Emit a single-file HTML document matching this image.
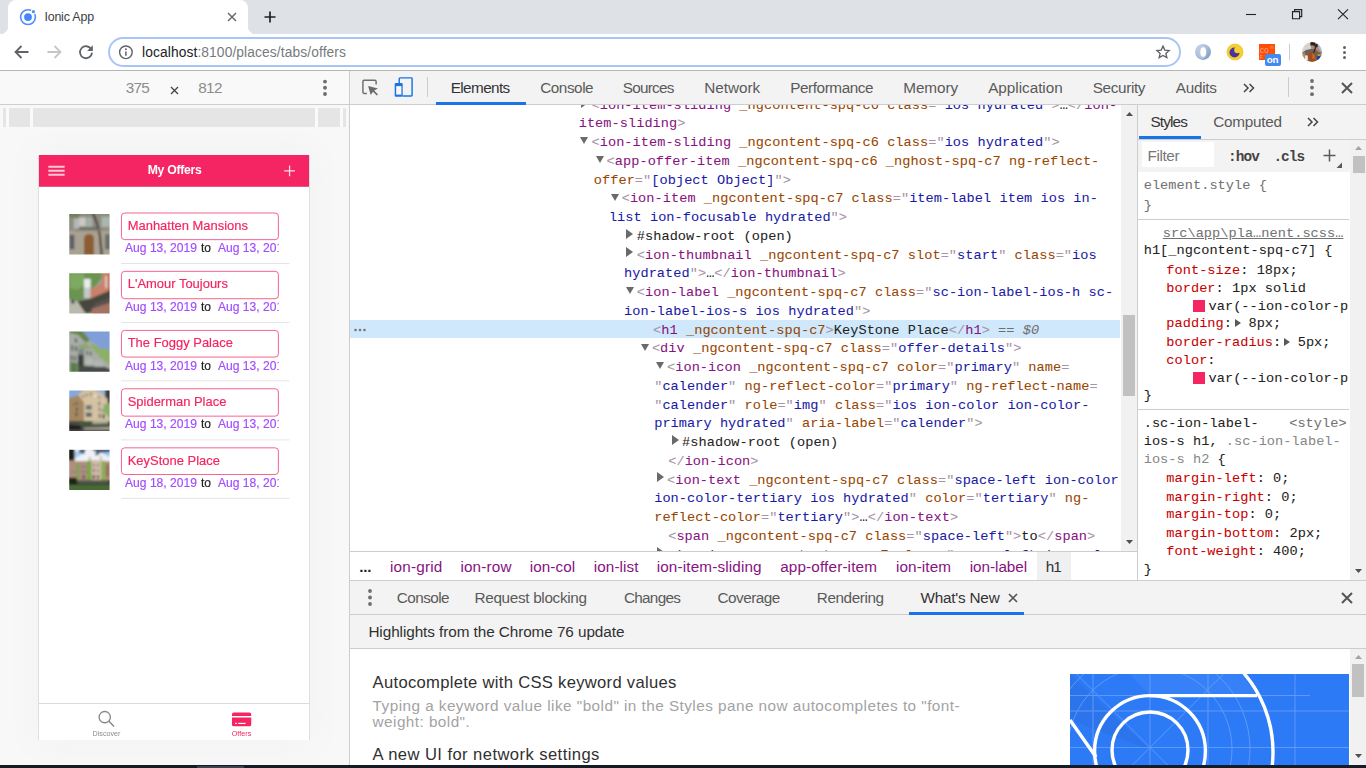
<!DOCTYPE html>
<html lang="en"><head><meta charset="utf-8"><title>Ionic App</title>
<style>
*{box-sizing:border-box}
html,body{margin:0;padding:0}
body{width:1366px;height:768px;overflow:hidden;position:relative;background:#fff;font-family:"Liberation Sans",sans-serif}
.t{position:absolute;white-space:pre;display:block}
.sans{font-family:"Liberation Sans",sans-serif}
.mono{font-family:"Liberation Mono",monospace}
.b{font-weight:700}
.abs{position:absolute}
svg{position:absolute;overflow:visible}
#tabstrip{left:0;top:0;width:1366px;height:34px;background:#dee1e6}
#tab{left:8px;top:0;width:240px;height:34px;background:#fff;border-radius:8px 8px 0 0}
#tab:before,#tab:after{content:"";position:absolute;bottom:0;width:8px;height:8px;background:radial-gradient(circle at 0 0,transparent 8px,#fff 8.5px)}
#tab:before{left:-8px}
#tab:after{right:-8px;background:radial-gradient(circle at 100% 0,transparent 8px,#fff 8.5px)}
#toolbar{left:0;top:34px;width:1366px;height:37px;background:#fff;border-bottom:1px solid #b6b6b6}
#omni{left:108px;top:37px;width:1073px;height:30px;border:2px solid #a9c5f7;border-radius:15px;background:#fff}

#devarea{left:0;top:71px;width:349px;height:694px;background:#f8f8f8}
#devbar{left:0;top:71px;width:349px;height:34px;border-bottom:1px solid #cdcdcd;background:#f9f9f9}
#vsep{left:349px;top:71px;width:1px;height:694px;background:#cdcdcd}
#mq{left:3px;top:108px;width:343px;height:19px;background:#e5e5e5}
#mq i{position:absolute;top:0;width:3px;height:19px;background:#fafafa}
#phonewrap{left:39px;top:155px;width:270px;height:585px;background:#fff;box-shadow:-1px 0 0 #dedede,1px 0 0 #dedede,0 0 22px 6px rgba(255,255,255,.7),0 0 24px rgba(120,120,120,.18)}
#phone{left:0;top:0;width:375px;height:812px;transform:scale(.72,.7204);transform-origin:0 0;overflow:hidden;background:#fff;font-family:"Liberation Sans",sans-serif}
#hdr{left:0;top:0;width:375px;height:44px;background:#f42562;box-shadow:inset 0 -1px 0 rgba(0,0,0,.13)}
#hdr .ttl{left:0;top:0;width:375px;height:44px;line-height:42px;text-align:center;color:#fff;font-size:17px;font-weight:700;letter-spacing:-.42px;padding-left:1.5px}
.thumb{left:41.5px;width:56px;height:56px;overflow:hidden}
.h1{left:114.2px;width:219px;height:38.4px;border:1px solid #f42562;border-radius:5px;color:#f42562;font-size:18px;line-height:34.8px;padding:0 8px;white-space:pre;overflow:hidden;-webkit-text-stroke:.25px #f42562}
.dt{left:114.2px;width:219px;height:22px;overflow:hidden;white-space:pre;font-size:16.8px;line-height:22px;color:#a24dff;-webkit-text-stroke:.25px #a24dff}
.dt b{font-weight:400;color:#222;-webkit-text-stroke:.25px #222}
.dv{left:114.2px;width:234px;height:1px;background:#dadada}
#tabbar{left:0;top:761px;width:375px;height:51px;border-top:1px solid #cfcfcf;background:#fff}
.tl{top:36px;width:187.5px;text-align:center;font-size:10px;line-height:12px;position:absolute}

#dtbar{left:350px;top:71px;width:1016px;height:34px;background:#f3f3f3;border-bottom:1px solid #cdcdcd}
#tree{left:350px;top:105px;width:770px;height:446px;overflow:hidden;background:#fff}
.ln{position:absolute;white-space:pre;font-family:"Liberation Mono",monospace;font-size:13.6px;letter-spacing:0.054px;line-height:18.75px;height:18.75px;color:#222;-webkit-text-stroke:.06px}
.p{color:#a894a6}.g{color:#881280}.a{color:#994500}.v{color:#1a1aa6}.x{color:#222}
.td,.tr{position:absolute;width:0;height:0}
.td{border-left:4.8px solid transparent;border-right:4.8px solid transparent;border-top:7.2px solid #6a6a6a}
.tr{border-top:5.1px solid transparent;border-bottom:5.1px solid transparent;border-left:7.4px solid #6a6a6a}
#sel{left:0;top:215px;width:770px;height:18px;background:#cfe8fc}
.sb{background:#f1f1f1}
.th{background:#c1c1c1}

#stpane{left:1138px;top:105px;width:228px;height:475px;background:#fff;overflow:hidden}
#sttabs{left:0;top:0;width:228px;height:35px;background:#f3f3f3;border-bottom:1px solid #cdcdcd}
#stfilter{left:0;top:35px;width:228px;height:30px;background:#f3f3f3}
#stbody{left:0;top:65px;width:211px;height:410px;overflow:hidden}
.sl{position:absolute;white-space:pre;font-family:"Liberation Mono",monospace;font-size:13.6px;letter-spacing:0.054px;line-height:18px;height:18px;color:#222;-webkit-text-stroke:.06px}
.pr{color:#c80000}.gy{color:#888}.dg{color:#737373}
.sw{position:absolute;width:12px;height:12px;background:#f42562}
.hr{position:absolute;left:0;width:211px;height:1px;background:#cdcdcd}
.tri{position:absolute;width:0;height:0;border-top:4px solid transparent;border-bottom:4px solid transparent;border-left:6px solid #5a5a5a}

#crumbs{left:350px;top:551px;width:787px;height:30px;background:#fff;border-top:1px solid #cdcdcd}
#dsep{left:350px;top:580px;width:1016px;height:1px;background:#cdcdcd}
#drawtabs{left:350px;top:581px;width:1016px;height:34px;background:#f3f3f3;border-bottom:1px solid #cdcdcd}
#hl{left:350px;top:615px;width:1016px;height:34px;background:#f3f3f3;border-bottom:1px solid #cdcdcd}
#wn{left:350px;top:649px;width:1016px;height:116px;background:#fff;overflow:hidden}
#taskbar{left:0;top:765px;width:1366px;height:3px;background:#141c26}
</style></head>
<body>
<svg width="0" height="0" style="position:absolute"><defs><filter id="bl" x="-15%" y="-15%" width="130%" height="130%"><feGaussianBlur stdDeviation="1.7"/></filter><filter id="bl2" x="-10%" y="-10%" width="120%" height="120%"><feGaussianBlur stdDeviation="0.55"/></filter></defs></svg>
<div class="abs" id="tabstrip"><div class="abs" id="tab"></div></div>
<div class="abs" id="toolbar"></div><div class="abs" id="omni"></div>
<svg style="left:19px;top:8px" width="18" height="18" viewBox="0 0 18 18"><circle cx="9" cy="9.1" r="7.4" fill="none" stroke="#4d8dff" stroke-width="1.6"/><circle cx="9" cy="9.1" r="3.9" fill="#4586ff"/><circle cx="14.4" cy="3.7" r="2.7" fill="#fff"/><circle cx="14.4" cy="3.7" r="1.6" fill="#4d8dff"/></svg>
<span class="t sans" style="left:44.4px;top:6.7px;font-size:12.4px;letter-spacing:-0.169px;color:#3c4043;line-height:20px;">Ionic App</span>
<svg style="left:227px;top:12px" width="10" height="10" viewBox="0 0 10 10"><path d="M1 1L9 9M9 1L1 9" stroke="#5f6368" stroke-width="1.4" fill="none"/></svg>
<svg style="left:264px;top:11px" width="12" height="12" viewBox="0 0 12 12"><path d="M6 0.5V11.5M0.5 6H11.5" stroke="#202124" stroke-width="1.7" fill="none"/></svg>
<svg style="left:1246px;top:9px" width="110" height="12" viewBox="0 0 110 12"><path d="M0 5.5H10" stroke="#222" stroke-width="1.1" fill="none"/><path d="M46.5 2.6H53.6V9.7H46.5ZM48.6 2.6V0.6H55.7V7.6H53.6" stroke="#222" stroke-width="1.15" fill="none"/><path d="M92 0.3L102 10.1M102 0.3L92 10.1" stroke="#222" stroke-width="1.1" fill="none"/></svg>
<svg style="left:14px;top:45px" width="16" height="14" viewBox="0 0 16 14"><path d="M14.5 7H2M7.5 1L1.5 7L7.5 13" stroke="#5f6368" stroke-width="1.8" fill="none"/></svg>
<svg style="left:46px;top:45px" width="16" height="14" viewBox="0 0 16 14"><path d="M1.5 7H14M8.5 1L14.5 7L8.5 13" stroke="#c4c7ca" stroke-width="1.8" fill="none"/></svg>
<svg style="left:78px;top:44px" width="16" height="16" viewBox="0 0 16 16"><path d="M13.2 5.2A6 6 0 1 0 14 8.6" stroke="#5f6368" stroke-width="1.8" fill="none"/><path d="M14.8 1.2V6.9H9.1Z" fill="#5f6368"/></svg>
<svg style="left:118px;top:45px" width="15" height="15" viewBox="0 0 15 15"><circle cx="7.9" cy="7.3" r="6.3" fill="none" stroke="#5f6368" stroke-width="1.4"/><path d="M7.9 6.4V10.8" stroke="#5f6368" stroke-width="1.5"/><circle cx="7.9" cy="4.2" r="0.95" fill="#5f6368"/></svg>
<span class="t sans" style="left:142px;top:42.5px;font-size:13.8px;line-height:20px;letter-spacing:0.102px;color:#202124">localhost<span style="color:#767a7e">:8100/places/tabs/offers</span></span>
<svg style="left:1155px;top:44px" width="16" height="16" viewBox="0 0 24 24"><path d="M12 3.2l2.7 6 6.5.6-4.9 4.3 1.5 6.4L12 17.1l-5.8 3.4 1.5-6.4-4.9-4.3 6.5-.6z" fill="none" stroke="#5f6368" stroke-width="2"/></svg>
<svg style="left:1194px;top:43px" width="18" height="18" viewBox="0 0 18 18"><defs><linearGradient id="g1" x1="0" y1="0" x2="1" y2="1"><stop offset="0" stop-color="#cfdcee"/><stop offset="1" stop-color="#7896c0"/></linearGradient></defs><circle cx="9" cy="8.9" r="8" fill="url(#g1)"/><ellipse cx="8.2" cy="9" rx="4.6" ry="6.6" fill="#b9cce4" opacity=".8"/><ellipse cx="9.2" cy="9" rx="2.9" ry="4.8" fill="#fff"/></svg>
<svg style="left:1226px;top:43px" width="18" height="18" viewBox="0 0 18 18"><circle cx="9" cy="9" r="8" fill="#f7d02e" stroke="#e3b91f" stroke-width=".6"/><circle cx="8.5" cy="9.5" r="5" fill="#47349c"/><circle cx="11.5" cy="7" r="3.3" fill="#f7d02e"/></svg>
<div class="abs" style="left:1259px;top:44px;width:16px;height:16px;background:#fe4d07"></div>
<svg style="left:1259px;top:44px" width="16" height="16" viewBox="0 0 16 16"><text x="0.8" y="9.2" font-family="Liberation Sans,sans-serif" font-size="8.5" fill="#ffa581">co</text><text x="11" y="4.6" font-family="Liberation Sans,sans-serif" font-size="4.5" fill="#ffa581">m</text><text x="0.8" y="15" font-family="Liberation Sans,sans-serif" font-size="5" fill="#ffa581">F</text></svg>
<div class="abs" style="left:1265px;top:54px;width:16px;height:12px;background:#4189f4;border-radius:2px"></div>
<span class="t sans b" style="left:1266.7px;top:53.8px;font-size:9.8px;letter-spacing:-0.086px;color:#fff;line-height:12px;">on</span>
<div class="abs" style="left:1289px;top:44px;width:1px;height:16px;background:#c8cacd"></div>
<svg style="left:1302.1px;top:41.9px" width="20" height="20" viewBox="0 0 20 20"><defs><clipPath id="av"><circle cx="10" cy="10" r="10"/></clipPath></defs><g clip-path="url(#av)"><g filter="url(#bl2)"><rect x="-3" y="-3" width="26" height="26" fill="#8a8078"/><path d="M-3 -3H9V7L3 10L-3 13Z" fill="#d6d2ce"/><path d="M14 3L23 2V11L16 9Z" fill="#a8b6c8"/><path d="M0 11L4 8L9 7H14L18 10L19 14L14 16L3 15Z" fill="#6c625a"/><rect x="8.4" y="0" width="4.6" height="3.8" fill="#2a2420"/><rect x="9.1" y="3.4" width="2.4" height="3.8" fill="#b88a74"/><path d="M12.6 2.4L15.6 2L15.8 5.4L13 6Z" fill="#34201c"/><path d="M12.6 5.6L15.8 5.2L18.8 9.4L17.6 10.6L14 8Z" fill="#b98674"/><path d="M13.2 5L14.2 5.4L10.2 16L9.2 15.6Z" fill="#2e2018"/><path d="M0.5 11L3 10.6L3.4 15L1 15Z" fill="#c08850"/><path d="M6 14C6 11 8 10.6 10 10.6C13 10.6 14.4 13 14 17C13.6 20 12 21 9.6 21C7 21 6 18 6 14Z" fill="#a44c1a"/><path d="M10.4 11.4C12.4 11.6 13.2 13.6 12.8 16.4L10.6 17Z" fill="#c86c2a"/><rect x="3" y="13.4" width="2.8" height="4.6" fill="#e6e2de"/><path d="M14.8 13.6L18.8 13L17 19L14.6 18Z" fill="#1b409c"/><path d="M15.6 12.4L19 12L18.6 13.8L15.4 14.2Z" fill="#c8a030"/></g></g></svg>
<svg style="left:1342px;top:45px" width="5" height="15" viewBox="0 0 5 15"><circle cx="2.5" cy="2.4" r="1.5" fill="#5f6368"/><circle cx="2.5" cy="7.4" r="1.5" fill="#5f6368"/><circle cx="2.5" cy="12.4" r="1.5" fill="#5f6368"/></svg>
<div class="abs" id="devarea"></div><div class="abs" id="devbar"></div><div class="abs" id="vsep"></div>
<span class="t sans" style="left:125.7px;top:77.7px;font-size:15.3px;letter-spacing:-0.709px;color:#8c8c8c;line-height:20px;">375</span>
<span class="t sans" style="left:198.3px;top:77.7px;font-size:15.3px;letter-spacing:-0.709px;color:#8c8c8c;line-height:20px;">812</span>
<svg style="left:170px;top:85.6px" width="9" height="9" viewBox="0 0 9 9"><path d="M1 1L8 8M8 1L1 8" stroke="#444" stroke-width="1.3" fill="none"/></svg>
<svg style="left:322px;top:79px" width="6" height="17" viewBox="0 0 6 17"><circle cx="3" cy="2.6" r="1.95" fill="#6e6e6e"/><circle cx="3" cy="8.8" r="1.95" fill="#6e6e6e"/><circle cx="3" cy="15" r="1.95" fill="#6e6e6e"/></svg>
<div class="abs" id="mq"><i style="left:3px"></i><i style="left:27px"></i><i style="left:312px"></i><i style="left:337px"></i></div>
<div class="abs" id="phonewrap"><div class="abs" id="phone"><div class="abs" id="hdr"><div class="abs ttl">My Offers</div><svg style="left:12.7px;top:15px" width="24" height="14" viewBox="0 0 24 14"><path d="M0 1.3H22.6M0 6.8H22.6M0 12.4H22.6" stroke="#fff" stroke-opacity=".74" stroke-width="2.6" fill="none"/></svg><svg style="left:340px;top:13.8px" width="16" height="16" viewBox="0 0 16 16"><path d="M8 0.5V15.5M0.5 8H15.5" stroke="#fff" stroke-opacity=".85" stroke-width="1.7" fill="none"/></svg></div>
<svg class="thumb" style="top:82.3px" width="56" height="56" viewBox="0 0 56 56"><g filter="url(#bl)"><rect x="-8" y="-8" width="72" height="72" fill="#a9a292"/><rect x="-4.6" y="-4.6" width="65.2" height="27.6" fill="#8e8d80"/><rect x="-4.6" y="-4.6" width="19.2" height="9.2" fill="#6f7f55"/><rect x="6.3" y="6.3" width="7.1" height="14.2" fill="#b4b8bc"/><rect x="13.4" y="4.6" width="9.6" height="12.5" fill="#c9c8c4"/><rect x="23.8" y="4.6" width="8.4" height="13.4" fill="#a4aeaa"/><rect x="44.7" y="3.8" width="12.6" height="14.2" fill="#aab6ae"/><rect x="14.6" y="18.0" width="24.3" height="4.2" fill="#6a6a60"/><rect x="0.4" y="28.8" width="6.7" height="20.1" fill="#5a5d66"/><rect x="49.7" y="28.0" width="7.6" height="20.9" fill="#68706a"/><path d="M20.5 57.3V33.9a6.9 6.4 0 0 1 13.8 0V57.3Z" fill="#8c5c30"/><path d="M31.3 -1.3L34.7 -1.3L39.7 12.1L43.9 28.8L46.8 57.3L43.5 57.3L41.0 28.8L37.2 13.8Z" fill="#463e34"/><rect x="7.9" y="20.5" width="37.7" height="2.5" fill="#7c7a70"/></g></svg>
<div class="abs h1" style="top:79.7px">Manhatten Mansions</div>
<div class="abs dt" style="top:118.8px"><span style="margin-left:5.3px">Aug 13, 2019</span><b style="margin-left:5.6px">to</b><span style="margin-left:9.6px">Aug 13, 2019</span></div>
<div class="abs dv" style="top:150.1px"></div>
<svg class="thumb" style="top:163.8px" width="56" height="56" viewBox="0 0 56 56"><g filter="url(#bl)"><rect x="-8" y="-8" width="72" height="72" fill="#9aa08c"/><path d="M-4.6 -4.6L47.2 -4.6L45.6 5.4L38.9 14.6L30.5 23.0L23.0 34.7L11.3 38.9L-4.6 35.5Z" fill="#6a9450"/><path d="M0.4 0.4L20.5 0.4L20.5 16.3L12.1 23.0L0.4 20.5Z" fill="#88b26c" opacity="0.7"/><rect x="20.5" y="7.9" width="9.2" height="12.6" fill="#e8ecea"/><rect x="20.5" y="20.5" width="9.2" height="14.2" fill="#c6c8cc"/><path d="M29.7 23.0L45.6 13.8L45.6 0.4L60.6 -2.1L60.6 28.8L29.7 36.4Z" fill="#cb806a"/><rect x="50.2" y="3.8" width="2.9" height="16.7" fill="#e0dcd8"/><rect x="53.1" y="-2.1" width="7.5" height="30.9" fill="#c96a58"/><path d="M11.3 38.9L30.5 34.7L60.6 22.2L60.6 42.2L31.3 53.9L23.0 55.6L11.3 40.5Z" fill="#47463f"/><path d="M-4.6 35.5L11.3 38.9L23.8 58.9L-4.6 58.9Z" fill="#bab9ad"/><path d="M31.3 48.9L60.6 39.7L60.6 58.9L31.3 58.9Z" fill="#a47262"/><path d="M34.7 42.2L60.6 32.2L60.6 38.9L34.7 48.9Z" fill="#5a5650" opacity="0.8"/><rect x="2.9" y="37.2" width="4.2" height="5.0" fill="#3a4050"/></g></svg>
<div class="abs h1" style="top:161.2px">L'Amour Toujours</div>
<div class="abs dt" style="top:200.3px"><span style="margin-left:5.3px">Aug 13, 2019</span><b style="margin-left:5.6px">to</b><span style="margin-left:9.6px">Aug 13, 2019</span></div>
<div class="abs dv" style="top:231.7px"></div>
<svg class="thumb" style="top:245.4px" width="56" height="56" viewBox="0 0 56 56"><g filter="url(#bl)"><rect x="-8" y="-8" width="72" height="72" fill="#a9ada8"/><path d="M15.5 -4.6L60.6 -4.6L60.6 26.3L42.2 23.0L28.8 12.1Z" fill="#7f9fd6"/><path d="M0.4 -4.6L15.5 -4.6L28.8 12.1L23.0 15.5L12.1 4.6L0.4 2.1Z" fill="#66864c"/><path d="M28.8 14.6L42.2 23.0L60.6 26.3L60.6 48.9L45.6 38.9L31.3 23.0Z" fill="#8daf68"/><path d="M13.0 18.8L23.0 16.3L30.5 23.0L23.0 25.5L13.0 23.0Z" fill="#86a466" opacity="0.8"/><rect x="7.9" y="9.6" width="3.0" height="5.9" fill="#5c6864"/><rect x="2.9" y="18.8" width="2.5" height="8.4" fill="#5c6864"/><rect x="7.9" y="20.5" width="3.0" height="6.7" fill="#5c6864"/><rect x="2.1" y="33.0" width="2.5" height="7.5" fill="#5a625e"/><rect x="6.7" y="33.9" width="2.5" height="6.6" fill="#5a625e"/><rect x="12.5" y="23.8" width="8.0" height="8.4" fill="#7e8a8a"/><rect x="12.1" y="32.2" width="8.0" height="16.7" fill="#3c403c"/><rect x="23.8" y="27.2" width="2.5" height="5.0" fill="#56605c"/><rect x="28.8" y="28.0" width="2.1" height="5.0" fill="#6a4a44"/><rect x="23.0" y="37.2" width="9.2" height="8.4" fill="#b6bab7"/><path d="M1.3 42.2L11.3 43.9L11.3 58.9L1.3 58.9Z" fill="#587e46"/><path d="M12.1 47.2L48.9 48.9L60.6 53.9L60.6 58.9L12.1 58.9Z" fill="#474b47"/><rect x="34.7" y="40.5" width="12.5" height="8.4" fill="#b2b6b3"/></g></svg>
<div class="abs h1" style="top:242.8px">The Foggy Palace</div>
<div class="abs dt" style="top:281.9px"><span style="margin-left:5.3px">Aug 13, 2019</span><b style="margin-left:5.6px">to</b><span style="margin-left:9.6px">Aug 13, 2019</span></div>
<div class="abs dv" style="top:313.2px"></div>
<svg class="thumb" style="top:326.9px" width="56" height="56" viewBox="0 0 56 56"><g filter="url(#bl)"><rect x="-8" y="-8" width="72" height="72" fill="#c9b795"/><path d="M-4.6 -4.6L23.0 -4.6L12.1 6.3L7.1 9.6L-4.6 12.1Z" fill="#86a8dc"/><path d="M37.2 -4.6L49.7 -4.6L49.7 7.9L45.6 3.8L37.2 0.4Z" fill="#8fb0e0"/><rect x="49.7" y="-4.6" width="10.9" height="25.1" fill="#3a3c3e"/><path d="M-4.6 12.1L13.0 6.3L20.5 16.3L20.5 42.2L-4.6 45.6Z" fill="#a48863"/><path d="M23.0 -1.3L37.2 0.4L53.1 11.3L53.9 42.2L20.5 42.2L20.5 16.3L13.0 6.3Z" fill="#d4c2a2"/><rect x="28.4" y="2.9" width="2.9" height="4.2" fill="#8a8c8a"/><rect x="34.7" y="5.4" width="2.5" height="4.2" fill="#e8e4d8"/><rect x="40.5" y="7.9" width="2.6" height="3.4" fill="#8a8c8a"/><rect x="18.4" y="6.3" width="2.1" height="3.3" fill="#6e6a60"/><rect x="23.0" y="4.6" width="2.1" height="3.3" fill="#6e6a60"/><rect x="23.0" y="20.5" width="8.3" height="5.8" fill="#66727a"/><rect x="23.0" y="30.5" width="8.3" height="5.9" fill="#5a666a"/><rect x="40.5" y="15.5" width="2.6" height="5.0" fill="#7a7e7c"/><rect x="41.0" y="23.8" width="2.5" height="5.0" fill="#7a7e7c"/><rect x="41.0" y="32.2" width="2.5" height="5.8" fill="#5a625e"/><rect x="45.6" y="25.5" width="2.5" height="5.0" fill="#8a9498"/><rect x="9.2" y="16.3" width="2.9" height="3.3" fill="#5e5648"/><rect x="9.2" y="23.8" width="2.9" height="4.2" fill="#5e5648"/><rect x="8.4" y="30.5" width="2.9" height="5.0" fill="#5e5648"/><rect x="5.4" y="18.0" width="2.1" height="2.5" fill="#66594a"/><rect x="46.4" y="33.0" width="2.5" height="5.9" fill="#2e2c2a"/><path d="M47.2 19.6L60.6 16.3L60.6 42.2L48.9 31.3Z" fill="#8aae64"/><rect x="-4.6" y="42.2" width="65.2" height="16.7" fill="#4c4a40"/><path d="M12.1 43.9L53.9 42.2L53.9 48.9L12.1 49.7Z" fill="#46583a"/><path d="M32.2 42.2L53.9 40.5L53.9 45.6L32.2 46.4Z" fill="#c4c0b0" opacity="0.8"/><path d="M-4.6 47.2L16.3 48.9L16.3 53.9L-4.6 53.9Z" fill="#1c1c22"/><path d="M20.5 51.6L60.6 50.6L60.6 53.9L20.5 53.9Z" fill="#aeaa9e"/></g></svg>
<div class="abs h1" style="top:324.4px">Spiderman Place</div>
<div class="abs dt" style="top:363.4px"><span style="margin-left:5.3px">Aug 13, 2019</span><b style="margin-left:5.6px">to</b><span style="margin-left:9.6px">Aug 13, 2019</span></div>
<div class="abs dv" style="top:394.8px"></div>
<svg class="thumb" style="top:408.5px" width="56" height="56" viewBox="0 0 56 56"><g filter="url(#bl)"><rect x="-8" y="-8" width="72" height="72" fill="#b28e7e"/><rect x="-4.6" y="-4.6" width="65.2" height="20.9" fill="#eef2f6"/><path d="M42.2 0.4L60.6 0.4L60.6 12.1L48.9 7.1Z" fill="#9ccaf0"/><path d="M7.9 2.9L16.3 0.4L15.5 8.8L7.9 12.1Z" fill="#a8d0f0"/><rect x="-4.6" y="-4.6" width="12.1" height="20.1" fill="#1a1e18"/><path d="M14.6 -1.3L23.0 -1.3L20.5 6.3L13.8 4.6Z" fill="#4a5a7a"/><path d="M30.5 -1.3L60.6 -1.3L60.6 2.9L38.9 4.6Z" fill="#3e4c6c"/><path d="M35.5 4.6L42.2 4.6L40.5 7.9L36.4 7.9Z" fill="#5a6a86"/><rect x="0.0" y="16.3" width="60.6" height="26.8" fill="#b28e7e"/><rect x="30.5" y="14.6" width="14.2" height="28.5" fill="#d2baa8"/><rect x="27.2" y="10.4" width="2.5" height="6.7" fill="#c8a898"/><rect x="42.6" y="8.8" width="3.0" height="7.5" fill="#d8c0b0"/><rect x="3.8" y="14.6" width="3.3" height="3.4" fill="#a88474"/><rect x="15.5" y="22.2" width="8.7" height="2.5" fill="#8a8080"/><rect x="15.5" y="28.8" width="8.7" height="3.4" fill="#8e8486"/><rect x="2.1" y="29.7" width="7.5" height="2.5" fill="#8a8688"/><rect x="33.0" y="20.5" width="2.5" height="2.5" fill="#6e6668"/><rect x="38.9" y="20.5" width="2.1" height="2.5" fill="#6e6668"/><rect x="33.0" y="27.2" width="2.5" height="3.3" fill="#665e5e"/><rect x="38.9" y="28.0" width="2.1" height="2.5" fill="#665e5e"/><rect x="32.6" y="35.5" width="2.9" height="5.0" fill="#3e3a3a"/><rect x="38.5" y="35.5" width="2.5" height="5.0" fill="#3e3a3a"/><rect x="18.8" y="35.5" width="2.5" height="5.0" fill="#4a4444"/><rect x="50.6" y="20.5" width="5.0" height="16.7" fill="#9a6e62"/><rect x="10.0" y="18.8" width="3.6" height="21.7" fill="#76a648"/><rect x="24.7" y="15.5" width="6.0" height="27.6" fill="#76a646"/><rect x="44.6" y="15.5" width="5.3" height="26.7" fill="#84b44e"/><rect x="-4.6" y="42.2" width="65.2" height="7.5" fill="#3a4030"/><rect x="-4.6" y="38.9" width="15.0" height="10.8" fill="#1e2616"/><rect x="12.1" y="43.1" width="41.8" height="3.3" fill="#5a5e52"/><rect x="-4.6" y="48.9" width="65.2" height="10.0" fill="#4a6a36"/></g></svg>
<div class="abs h1" style="top:405.9px">KeyStone Place</div>
<div class="abs dt" style="top:445.0px"><span style="margin-left:5.3px">Aug 18, 2019</span><b style="margin-left:5.6px">to</b><span style="margin-left:9.6px">Aug 18, 2019</span></div>
<div class="abs dv" style="top:476.3px"></div>
<div class="abs" id="tabbar"><svg style="left:79px;top:7px" width="30" height="30" viewBox="0 0 30 30"><circle cx="12.3" cy="11.3" r="7.8" fill="none" stroke="#868686" stroke-width="1.8"/><path d="M17.8 16.8L25.2 24.2" stroke="#868686" stroke-width="2" fill="none"/></svg><svg style="left:267.5px;top:12.3px" width="26.8" height="19" viewBox="0 0 26.8 19"><path d="M2.6 0H24.2a2.6 2.6 0 0 1 2.6 2.6V4.8H0V2.6a2.6 2.6 0 0 1 2.6-2.6Z" fill="#f42562"/><path d="M0 6.7H26.8V16.4a2.6 2.6 0 0 1-2.6 2.6H2.6a2.6 2.6 0 0 1-2.6-2.6Z" fill="#f42562"/><rect x="4.4" y="14.2" width="2.4" height="1.6" fill="#fff"/><rect x="8.7" y="14.2" width="10.3" height="1.6" fill="#fff"/></svg><div class="tl" style="left:0;color:#8c8c8c">Discover</div><div class="tl" style="left:187.5px;color:#f42562">Offers</div></div></div></div>
<div class="abs" id="dtbar"></div>
<svg style="left:354px;top:72px" width="80" height="32" viewBox="354 72 80 32"><path d="M366.9 93.4H364a1.1 1.1 0 0 1-1.1-1.1V81.4a1.1 1.1 0 0 1 1.1-1.1H375a1.1 1.1 0 0 1 1.1 1.1V84.6" stroke="#6e6e6e" stroke-width="1.45" fill="none"/><path d="M368.1 86.1L378 88.6L374.2 90.6L378 94.4L376.8 95.5L373 91.7L370.7 95Z" fill="#6a6a6a"/><path d="M399.2 83.1V78.7a.8 .8 0 0 1 .8-.8H411.3a.8 .8 0 0 1 .8 .8V95.2a.8 .8 0 0 1-.8 .8H402.6" stroke="#1a73e8" stroke-width="1.45" fill="none"/><rect x="394.7" y="83.1" width="8" height="13.6" rx="1" fill="#1a73e8"/><rect x="396.2" y="86.1" width="5.2" height="8.5" fill="#fdf8f0"/></svg>
<div class="abs" style="left:427px;top:77px;width:1px;height:20px;background:#ccc"></div>
<span class="t sans" style="left:450.7px;top:77.7px;font-size:15.3px;letter-spacing:-0.597px;color:#333;line-height:20px;">Elements</span>
<span class="t sans" style="left:540.2px;top:77.7px;font-size:15.3px;letter-spacing:-0.448px;color:#5a5a5a;line-height:20px;">Console</span>
<span class="t sans" style="left:622.7px;top:77.7px;font-size:15.3px;letter-spacing:-0.733px;color:#5a5a5a;line-height:20px;">Sources</span>
<span class="t sans" style="left:704.2px;top:77.7px;font-size:15.3px;letter-spacing:-0.016px;color:#5a5a5a;line-height:20px;">Network</span>
<span class="t sans" style="left:790.2px;top:77.7px;font-size:15.3px;letter-spacing:-0.417px;color:#5a5a5a;line-height:20px;">Performance</span>
<span class="t sans" style="left:903.2px;top:77.7px;font-size:15.3px;letter-spacing:-0.043px;color:#5a5a5a;line-height:20px;">Memory</span>
<span class="t sans" style="left:988.2px;top:77.7px;font-size:15.3px;letter-spacing:-0.032px;color:#5a5a5a;line-height:20px;">Application</span>
<span class="t sans" style="left:1092.7px;top:77.7px;font-size:15.3px;letter-spacing:-0.346px;color:#5a5a5a;line-height:20px;">Security</span>
<span class="t sans" style="left:1175.7px;top:77.7px;font-size:15.3px;letter-spacing:-0.254px;color:#5a5a5a;line-height:20px;">Audits</span>
<div class="abs" style="left:436px;top:102px;width:90px;height:3px;background:#1a73e8"></div>
<svg style="left:1243px;top:83px" width="12" height="10" viewBox="0 0 12 10"><path d="M1 1L5 5L1 9M6.5 1L10.5 5L6.5 9" stroke="#444" stroke-width="1.5" fill="none"/></svg>
<div class="abs" style="left:1288px;top:77px;width:1px;height:20px;background:#ccc"></div>
<svg style="left:1309px;top:79px" width="6" height="17" viewBox="0 0 6 17"><circle cx="3" cy="2" r="1.9" fill="#6e6e6e"/><circle cx="3" cy="8.6" r="1.9" fill="#6e6e6e"/><circle cx="3" cy="15.2" r="1.9" fill="#6e6e6e"/></svg>
<svg style="left:1341px;top:82px" width="12" height="12" viewBox="0 0 12 12"><path d="M1 1L11 11M11 1L1 11" stroke="#555" stroke-width="2" fill="none"/></svg>
<div class="abs" id="tree"><div class="abs" id="sel"></div>
<div class="ln" style="left:241.5px;top:-8.35px"><span class="p">&lt;</span><span class="g">ion-item-sliding </span><span class="a">_ngcontent-spq-c6 class</span><span class="p">="</span><span class="v">ios hydrated</span><span class="p">"&gt;</span><span class="x">…</span><span class="p">&lt;/</span><span class="g">ion-</span></div>
<i class="tr" style="left:231.1px;top:-7.5px"></i>
<div class="ln" style="left:228.7px;top:10.40px"><span class="g">item-sliding</span><span class="p">&gt;</span></div>
<div class="ln" style="left:241.5px;top:29.15px"><span class="p">&lt;</span><span class="g">ion-item-sliding </span><span class="a">_ngcontent-spq-c6 class</span><span class="p">="</span><span class="v">ios hydrated</span><span class="p">"&gt;</span></div>
<i class="td" style="left:230.4px;top:32.2px"></i>
<div class="ln" style="left:256.6px;top:47.90px"><span class="p">&lt;</span><span class="g">app-offer-item </span><span class="a">_ngcontent-spq-c6 _nghost-spq-c7 ng-reflect-</span></div>
<i class="td" style="left:245.5px;top:51.0px"></i>
<div class="ln" style="left:243.8px;top:66.65px"><span class="a">offer</span><span class="p">="</span><span class="v">[object Object]</span><span class="p">"&gt;</span></div>
<div class="ln" style="left:271.7px;top:85.40px"><span class="p">&lt;</span><span class="g">ion-item </span><span class="a">_ngcontent-spq-c7 class</span><span class="p">="</span><span class="v">item-label item ios in-</span></div>
<i class="td" style="left:260.6px;top:88.5px"></i>
<div class="ln" style="left:258.9px;top:104.15px"><span class="v">list ion-focusable hydrated</span><span class="p">"&gt;</span></div>
<div class="ln" style="left:286.8px;top:122.90px"><span class="x">#shadow-root (open)</span></div>
<i class="tr" style="left:276.4px;top:123.7px"></i>
<div class="ln" style="left:286.8px;top:141.65px"><span class="p">&lt;</span><span class="g">ion-thumbnail </span><span class="a">_ngcontent-spq-c7 slot</span><span class="p">="</span><span class="v">start</span><span class="p">" </span><span class="a">class</span><span class="p">="</span><span class="v">ios</span></div>
<i class="tr" style="left:276.4px;top:142.4px"></i>
<div class="ln" style="left:274.0px;top:160.40px"><span class="v">hydrated</span><span class="p">"&gt;</span><span class="x">…</span><span class="p">&lt;/</span><span class="g">ion-thumbnail</span><span class="p">&gt;</span></div>
<div class="ln" style="left:286.8px;top:179.15px"><span class="p">&lt;</span><span class="g">ion-label </span><span class="a">_ngcontent-spq-c7 class</span><span class="p">="</span><span class="v">sc-ion-label-ios-h sc-</span></div>
<i class="td" style="left:275.7px;top:182.2px"></i>
<div class="ln" style="left:274.0px;top:197.90px"><span class="v">ion-label-ios-s ios hydrated</span><span class="p">"&gt;</span></div>
<div class="ln" style="left:303.1px;top:216.65px"><span class="p">&lt;</span><span class="g">h1 </span><span class="a">_ngcontent-spq-c7</span><span class="p">&gt;</span><span class="x">KeyStone Place</span><span class="p">&lt;/</span><span class="g">h1</span><span class="p">&gt;</span><span style="color:#6e6e6e;font-style:italic"> == $0</span></div>
<div class="ln" style="left:301.9px;top:235.40px"><span class="p">&lt;</span><span class="g">div </span><span class="a">_ngcontent-spq-c7 class</span><span class="p">="</span><span class="v">offer-details</span><span class="p">"&gt;</span></div>
<i class="td" style="left:290.8px;top:238.5px"></i>
<div class="ln" style="left:317.0px;top:254.15px"><span class="p">&lt;</span><span class="g">ion-icon </span><span class="a">_ngcontent-spq-c7 color</span><span class="p">="</span><span class="v">primary</span><span class="p">" </span><span class="a">name</span><span class="p">=</span></div>
<i class="td" style="left:305.9px;top:257.2px"></i>
<div class="ln" style="left:304.2px;top:272.90px"><span class="p">"</span><span class="v">calender</span><span class="p">" </span><span class="a">ng-reflect-color</span><span class="p">="</span><span class="v">primary</span><span class="p">" </span><span class="a">ng-reflect-name</span><span class="p">=</span></div>
<div class="ln" style="left:304.2px;top:291.65px"><span class="p">"</span><span class="v">calender</span><span class="p">" </span><span class="a">role</span><span class="p">="</span><span class="v">img</span><span class="p">" </span><span class="a">class</span><span class="p">="</span><span class="v">ios ion-color ion-color-</span></div>
<div class="ln" style="left:304.2px;top:310.40px"><span class="v">primary hydrated</span><span class="p">" </span><span class="a">aria-label</span><span class="p">="</span><span class="v">calender</span><span class="p">"&gt;</span></div>
<div class="ln" style="left:332.1px;top:329.15px"><span class="x">#shadow-root (open)</span></div>
<i class="tr" style="left:321.7px;top:329.9px"></i>
<div class="ln" style="left:318.2px;top:347.90px"><span class="p">&lt;/</span><span class="g">ion-icon</span><span class="p">&gt;</span></div>
<div class="ln" style="left:317.0px;top:366.65px"><span class="p">&lt;</span><span class="g">ion-text </span><span class="a">_ngcontent-spq-c7 class</span><span class="p">="</span><span class="v">space-left ion-color</span></div>
<i class="tr" style="left:306.6px;top:367.4px"></i>
<div class="ln" style="left:304.2px;top:385.40px"><span class="v">ion-color-tertiary ios hydrated</span><span class="p">" </span><span class="a">color</span><span class="p">="</span><span class="v">tertiary</span><span class="p">" </span><span class="a">ng-</span></div>
<div class="ln" style="left:304.2px;top:404.15px"><span class="a">reflect-color</span><span class="p">="</span><span class="v">tertiary</span><span class="p">"&gt;</span><span class="x">…</span><span class="p">&lt;/</span><span class="g">ion-text</span><span class="p">&gt;</span></div>
<div class="ln" style="left:318.2px;top:422.90px"><span class="p">&lt;</span><span class="g">span </span><span class="a">_ngcontent-spq-c7 class</span><span class="p">="</span><span class="v">space-left</span><span class="p">"&gt;</span><span class="x">to</span><span class="p">&lt;/</span><span class="g">span</span><span class="p">&gt;</span></div>
<div class="ln" style="left:317.0px;top:441.65px"><span class="p">&lt;</span><span class="g">ion-icon </span><span class="a">_ngcontent-spq-c7 class</span><span class="p">="</span><span class="v">space-left ion-color</span></div>
<i class="tr" style="left:306.6px;top:442.4px"></i>
<svg style="left:4px;top:223.3px" width="12" height="4" viewBox="0 0 12 4"><circle cx="1.5" cy="2" r="1.3" fill="#777"/><circle cx="6" cy="2" r="1.3" fill="#777"/><circle cx="10.5" cy="2" r="1.3" fill="#777"/></svg></div>
<div class="abs sb" style="left:1121px;top:105px;width:16px;height:446px"></div>
<div class="abs th" style="left:1123px;top:315px;width:12px;height:81px"></div>
<svg style="left:1126.0px;top:112.0px" width="7" height="4" viewBox="0 0 7 4"><path d="M0 4L3.5 0L7 4Z" fill="#505050"/></svg>
<svg style="left:1126.0px;top:539.5px" width="7" height="4" viewBox="0 0 7 4"><path d="M0 0L3.5 4L7 0Z" fill="#505050"/></svg>
<div class="abs" style="left:1137px;top:105px;width:1px;height:476px;background:#cdcdcd"></div>
<div class="abs" id="stpane"><div class="abs" id="sttabs"></div><div class="abs" id="stfilter"></div>
<div class="abs" style="left:0.7px;top:31px;width:62.5px;height:3px;background:#1a73e8"></div>
<div class="abs" style="left:4px;top:37px;width:72px;height:25px;background:#fff"></div>
<div class="abs" id="stbody"><div class="abs" style="left:0;top:0;width:211px;height:1.5px;background:#f3f3f3"></div>
<div class="sl" style="left:5.7px;top:7.03px"><span class="dg">element.style {</span></div>
<div class="sl" style="left:5.7px;top:26.73px"><span class="dg">}</span></div>
<div class="sl" style="left:24.8px;top:54.83px"><span class="dg" style="text-decoration:underline">src\app\pla…nent.scss…</span></div>
<div class="sl" style="left:5.7px;top:72.03px">h1[_ngcontent-spq-c7] {</div>
<div class="sl" style="left:28.3px;top:91.73px"><span class="pr">font-size</span>: 18px;</div>
<div class="sl" style="left:28.3px;top:109.53px"><span class="pr">border</span>: 1px solid</div>
<div class="sl" style="left:70.5px;top:127.63px">var(--ion-color-primary);</div>
<div class="sl" style="left:28.3px;top:145.43px"><span class="pr">padding</span>:  8px;</div>
<div class="sl" style="left:28.3px;top:163.83px"><span class="pr">border-radius</span>:  5px;</div>
<div class="sl" style="left:28.3px;top:181.83px"><span class="pr">color</span>:</div>
<div class="sl" style="left:70.5px;top:200.03px">var(--ion-color-primary);</div>
<div class="sl" style="left:5.7px;top:217.33px">}</div>
<div class="sl" style="left:5.7px;top:245.03px">.sc-ion-label-</div>
<div class="sl" style="left:151.2px;top:245.03px"><span class="dg">&lt;style&gt;</span></div>
<div class="sl" style="left:5.7px;top:262.73px">ios-s h1, <span class="gy">.sc-ion-label-</span></div>
<div class="sl" style="left:5.7px;top:280.63px"><span class="gy">ios-s h2</span> {</div>
<div class="sl" style="left:28.3px;top:299.93px"><span class="pr">margin-left</span>: 0;</div>
<div class="sl" style="left:28.3px;top:318.53px"><span class="pr">margin-right</span>: 0;</div>
<div class="sl" style="left:28.3px;top:336.43px"><span class="pr">margin-top</span>: 0;</div>
<div class="sl" style="left:28.3px;top:354.73px"><span class="pr">margin-bottom</span>: 2px;</div>
<div class="sl" style="left:28.3px;top:372.63px"><span class="pr">font-weight</span>: 400;</div>
<div class="sl" style="left:5.7px;top:390.63px">}</div>
<div class="hr" style="top:49.2px"></div><div class="hr" style="top:239px"></div>
<i class="sw" style="left:54.5px;top:129.8px"></i><i class="sw" style="left:54.5px;top:202px"></i>
<i class="tri" style="left:97.0px;top:149.4px"></i>
<i class="tri" style="left:146.3px;top:167.8px"></i></div>
<div class="abs sb" style="left:212px;top:35px;width:16px;height:440px"></div>
<div class="abs th" style="left:214.5px;top:51.2px;width:12.5px;height:16.5px"></div>
<svg style="left:216.8px;top:40.8px" width="7" height="4" viewBox="0 0 7 4"><path d="M0 4L3.5 0L7 4Z" fill="#a3a3a3"/></svg>
<svg style="left:216.8px;top:464.0px" width="7" height="4" viewBox="0 0 7 4"><path d="M0 0L3.5 4L7 0Z" fill="#505050"/></svg></div>
<span class="t sans" style="left:1150.5px;top:111.7px;font-size:15.3px;letter-spacing:-0.844px;color:#333;line-height:20px;">Styles</span>
<span class="t sans" style="left:1213.2px;top:111.7px;font-size:15.3px;letter-spacing:-0.237px;color:#5a5a5a;line-height:20px;">Computed</span>
<svg style="left:1307px;top:116.5px" width="12" height="10" viewBox="0 0 12 10"><path d="M1 1L5 5L1 9M6.5 1L10.5 5L6.5 9" stroke="#444" stroke-width="1.5" fill="none"/></svg>
<span class="t sans" style="left:1147.5px;top:145.7px;font-size:15.3px;letter-spacing:-0.400px;color:#777;line-height:20px;">Filter</span>
<span class="t mono b" style="left:1228.0px;top:146.8px;font-size:14.4px;letter-spacing:-0.866px;color:#444;line-height:20px;">:hov</span>
<span class="t mono b" style="left:1273.4px;top:146.8px;font-size:14.4px;letter-spacing:-0.966px;color:#444;line-height:20px;">.cls</span>
<svg style="left:1323px;top:148.5px" width="20" height="20" viewBox="0 0 20 20"><path d="M6.5 0.5V12.5M0.5 6.5H12.5" stroke="#5a5a5a" stroke-width="1.5" fill="none"/><path d="M19 13.5V19H13.5Z" fill="#5a5a5a"/></svg>
<div class="abs" id="crumbs"></div><div class="abs" id="dsep"></div><div class="abs" id="drawtabs"></div><div class="abs" id="hl"></div><div class="abs" id="wn"></div>
<span class="t sans b" style="left:359.2px;top:556.7px;font-size:15.3px;letter-spacing:-0.251px;color:#222;line-height:20px;">...</span>
<span class="t sans" style="left:389.9px;top:556.7px;font-size:15.3px;letter-spacing:0.197px;color:#881280;line-height:20px;">ion-grid</span>
<span class="t sans" style="left:460.4px;top:556.7px;font-size:15.3px;letter-spacing:0.162px;color:#881280;line-height:20px;">ion-row</span>
<span class="t sans" style="left:529.7px;top:556.7px;font-size:15.3px;letter-spacing:0.061px;color:#881280;line-height:20px;">ion-col</span>
<span class="t sans" style="left:593.7px;top:556.7px;font-size:15.3px;letter-spacing:0.098px;color:#881280;line-height:20px;">ion-list</span>
<span class="t sans" style="left:656.7px;top:556.7px;font-size:15.3px;letter-spacing:0.138px;color:#881280;line-height:20px;">ion-item-sliding</span>
<span class="t sans" style="left:780.2px;top:556.7px;font-size:15.3px;letter-spacing:0.138px;color:#881280;line-height:20px;">app-offer-item</span>
<span class="t sans" style="left:895.9px;top:556.7px;font-size:15.3px;letter-spacing:0.110px;color:#881280;line-height:20px;">ion-item</span>
<span class="t sans" style="left:969.7px;top:556.7px;font-size:15.3px;letter-spacing:-0.038px;color:#881280;line-height:20px;">ion-label</span>
<div class="abs" style="left:1037px;top:552px;width:34px;height:28px;background:#f0f0f0"></div>
<span class="t sans" style="left:1045.7px;top:556.7px;font-size:15.3px;letter-spacing:-0.859px;color:#333;line-height:20px;">h1</span>
<svg style="left:367px;top:589px" width="6" height="17" viewBox="0 0 6 17"><circle cx="3" cy="2" r="1.9" fill="#6e6e6e"/><circle cx="3" cy="8.5" r="1.9" fill="#6e6e6e"/><circle cx="3" cy="15" r="1.9" fill="#6e6e6e"/></svg>
<span class="t sans" style="left:396.7px;top:587.7px;font-size:15.3px;letter-spacing:-0.534px;color:#5a5a5a;line-height:20px;">Console</span>
<span class="t sans" style="left:474.5px;top:587.7px;font-size:15.3px;letter-spacing:-0.323px;color:#5a5a5a;line-height:20px;">Request blocking</span>
<span class="t sans" style="left:623.9px;top:587.7px;font-size:15.3px;letter-spacing:-0.707px;color:#5a5a5a;line-height:20px;">Changes</span>
<span class="t sans" style="left:717.5px;top:587.7px;font-size:15.3px;letter-spacing:-0.493px;color:#5a5a5a;line-height:20px;">Coverage</span>
<span class="t sans" style="left:816.8px;top:587.7px;font-size:15.3px;letter-spacing:-0.422px;color:#5a5a5a;line-height:20px;">Rendering</span>
<span class="t sans" style="left:920.5px;top:587.7px;font-size:15.3px;letter-spacing:-0.214px;color:#333;line-height:20px;">What's New</span>
<svg style="left:1007.5px;top:592.5px" width="10" height="10" viewBox="0 0 10 10"><path d="M1 1L9 9M9 1L1 9" stroke="#555" stroke-width="1.7" fill="none"/></svg>
<div class="abs" style="left:909px;top:612px;width:115px;height:3px;background:#1a73e8"></div>
<svg style="left:1341px;top:592px" width="12" height="12" viewBox="0 0 12 12"><path d="M1 1L11 11M11 1L1 11" stroke="#555" stroke-width="2" fill="none"/></svg>
<span class="t sans" style="left:368.4px;top:621.7px;font-size:15.3px;letter-spacing:-0.071px;color:#303030;line-height:20px;">Highlights from the Chrome 76 update</span>
<span class="t sans" style="left:372.6px;top:671.8px;font-size:16.6px;letter-spacing:0.297px;color:#303030;line-height:22px;">Autocomplete with CSS keyword values</span>
<span class="t sans" style="left:372.6px;top:695.7px;font-size:15.3px;letter-spacing:0.459px;color:#a3a3a3;line-height:20px;">Typing a keyword value like "bold" in the Styles pane now autocompletes to "font-</span>
<span class="t sans" style="left:372.6px;top:711.7px;font-size:15.3px;letter-spacing:0.447px;color:#a3a3a3;line-height:20px;">weight: bold".</span>
<span class="t sans" style="left:372.6px;top:743.8px;font-size:16.6px;letter-spacing:0.425px;color:#303030;line-height:22px;">A new UI for network settings</span>
<svg style="left:1070px;top:674px;overflow:hidden" width="279" height="91" viewBox="0 0 279 91"><rect width="279" height="91" fill="#2d7af6"/><path d="M80 76L0 0V46Z" fill="#2a6fe6" opacity=".6"/><path d="M80 21.6H187L171 0H60Z" fill="#3a84fa" opacity=".7"/><g stroke="#6ea4fb" stroke-width="1" fill="none" opacity=".75"><path d="M23 0V91M80 0V91M138 0V91M225 0V91M0 21.5H240M0 37H279M0 73.5H279M0 -6.5L160 153.5M160 -6.5L0 153.5"/><circle cx="80" cy="75" r="82"/><circle cx="80" cy="75" r="100"/></g><g stroke="#fff" stroke-width="3.4" fill="none"><circle cx="80" cy="76" r="38"/><circle cx="80" cy="77" r="55.4"/><path d="M80 21.6H187M0 46L26 83"/><circle cx="82" cy="78" r="121"/></g></svg>
<div class="abs sb" style="left:1350px;top:649px;width:16px;height:116px"></div>
<div class="abs th" style="left:1352px;top:664px;width:12px;height:33px"></div>
<svg style="left:1354.8px;top:655.0px" width="7" height="4" viewBox="0 0 7 4"><path d="M0 4L3.5 0L7 4Z" fill="#a3a3a3"/></svg>
<svg style="left:1354.8px;top:754.0px" width="7" height="4" viewBox="0 0 7 4"><path d="M0 0L3.5 4L7 0Z" fill="#505050"/></svg>
<div class="abs" id="taskbar"></div><div class="abs" style="left:197px;top:766px;width:47px;height:2px;background:#3a434f"></div>
</body></html>
